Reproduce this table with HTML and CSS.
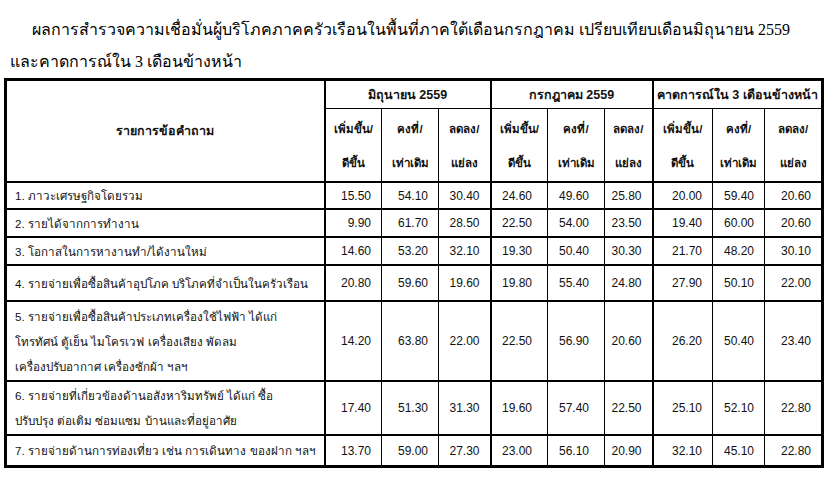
FILE: index.html
```html
<!DOCTYPE html>
<html lang="th">
<head>
<meta charset="utf-8">
<title>ผลการสำรวจความเชื่อมั่นผู้บริโภค</title>
<link rel="stylesheet" href="styles.css">
</head>
<body>
<div class="page">
  <h1 class="title">
    <span class="title-line first">ผลการสำรวจความเชื่อมั่นผู้บริโภคภาคครัวเรือนในพื้นที่ภาคใต้เดือนกรกฎาคม เปรียบเทียบเดือนมิถุนายน 2559</span>
    <span class="title-line">และคาดการณ์ใน 3 เดือนข้างหน้า</span>
  </h1>
  <table class="survey">
    <colgroup>
      <col class="c-item">
      <col class="c-a"><col class="c-b"><col class="c-c">
      <col class="c-d"><col class="c-e"><col class="c-f">
      <col class="c-g"><col class="c-h"><col class="c-i">
    </colgroup>
    <thead>
      <tr class="h1">
        <th rowspan="2" class="item-head grp-end">รายการข้อคำถาม</th>
        <th colspan="3" class="grp-end">มิถุนายน 2559</th>
        <th colspan="3" class="grp-end">กรกฎาคม 2559</th>
        <th colspan="3">คาดการณ์ใน 3 เดือนข้างหน้า</th>
      </tr>
      <tr class="h2">
        <th>เพิ่มขึ้น/<br>ดีขึ้น</th><th>คงที่/<br>เท่าเดิม</th><th class="grp-end">ลดลง/<br>แย่ลง</th>
        <th>เพิ่มขึ้น/<br>ดีขึ้น</th><th>คงที่/<br>เท่าเดิม</th><th class="grp-end">ลดลง/<br>แย่ลง</th>
        <th>เพิ่มขึ้น/<br>ดีขึ้น</th><th>คงที่/<br>เท่าเดิม</th><th>ลดลง/<br>แย่ลง</th>
      </tr>
    </thead>
    <tbody>
      <tr class="r1">
        <td class="item grp-end">1. ภาวะเศรษฐกิจโดยรวม</td>
        <td>15.50</td><td>54.10</td><td class="grp-end">30.40</td>
        <td class="mid">24.60</td><td class="mid">49.60</td><td class="grp-end">25.80</td>
        <td>20.00</td><td>59.40</td><td>20.60</td>
      </tr>
      <tr class="r2">
        <td class="item grp-end">2. รายได้จากการทำงาน</td>
        <td>9.90</td><td>61.70</td><td class="grp-end">28.50</td>
        <td class="mid">22.50</td><td class="mid">54.00</td><td class="grp-end">23.50</td>
        <td>19.40</td><td>60.00</td><td>20.60</td>
      </tr>
      <tr class="r3">
        <td class="item grp-end">3. โอกาสในการหางานทำ/ได้งานใหม่</td>
        <td>14.60</td><td>53.20</td><td class="grp-end">32.10</td>
        <td class="mid">19.30</td><td class="mid">50.40</td><td class="grp-end">30.30</td>
        <td>21.70</td><td>48.20</td><td>30.10</td>
      </tr>
      <tr class="r4">
        <td class="item grp-end">4. รายจ่ายเพื่อซื้อสินค้าอุปโภค บริโภคที่จำเป็นในครัวเรือน</td>
        <td>20.80</td><td>59.60</td><td class="grp-end">19.60</td>
        <td class="mid">19.80</td><td class="mid">55.40</td><td class="grp-end">24.80</td>
        <td>27.90</td><td>50.10</td><td>22.00</td>
      </tr>
      <tr class="r5">
        <td class="item grp-end">5. รายจ่ายเพื่อซื้อสินค้าประเภทเครื่องใช้ไฟฟ้า ได้แก่<br>โทรทัศน์ ตู้เย็น ไมโครเวฟ เครื่องเสียง พัดลม<br>เครื่องปรับอากาศ เครื่องซักผ้า ฯลฯ</td>
        <td>14.20</td><td>63.80</td><td class="grp-end">22.00</td>
        <td class="mid">22.50</td><td class="mid">56.90</td><td class="grp-end">20.60</td>
        <td>26.20</td><td>50.40</td><td>23.40</td>
      </tr>
      <tr class="r6">
        <td class="item grp-end">6. รายจ่ายที่เกี่ยวข้องด้านอสังหาริมทรัพย์ ได้แก่ ซื้อ<br>ปรับปรุง ต่อเติม ซ่อมแซม  บ้านและที่อยู่อาศัย</td>
        <td>17.40</td><td>51.30</td><td class="grp-end">31.30</td>
        <td class="mid">19.60</td><td class="mid">57.40</td><td class="grp-end">22.50</td>
        <td>25.10</td><td>52.10</td><td>22.80</td>
      </tr>
      <tr class="r7">
        <td class="item grp-end">7. รายจ่ายด้านการท่องเที่ยว เช่น การเดินทาง ของฝาก ฯลฯ</td>
        <td>13.70</td><td>59.00</td><td class="grp-end">27.30</td>
        <td class="mid">23.00</td><td class="mid">56.10</td><td class="grp-end">20.90</td>
        <td>32.10</td><td>45.10</td><td>22.80</td>
      </tr>
    </tbody>
  </table>
</div>
</body>
</html>
```

FILE: styles.css
```css
html, body {
  margin: 0;
  padding: 0;
  background: #ffffff;
  color: #000000;
}

.page {
  padding: 14px 0 0 4px;
}

.title {
  margin: 0;
  padding: 0;
  font-family: "Liberation Serif", serif;
  font-weight: normal;
  font-size: 16px;
  color: #000;
}

.title-line {
  display: block;
  height: 32px;
  line-height: 32px;
  white-space: nowrap;
  padding-left: 6px;
  overflow: visible;
}

.title-line.first {
  padding-left: 28px;
}

.survey {
  border-collapse: collapse;
  table-layout: fixed;
  width: 817px;
  border: 3px solid #000;
  font-family: "Liberation Sans", sans-serif;
  font-size: 12px;
  color: #111;
}

.c-item { width: 319px; }
.c-a { width: 57px; }
.c-b { width: 57px; }
.c-c { width: 52px; }
.c-d { width: 57px; }
.c-e { width: 57px; }
.c-f { width: 48px; }
.c-g { width: 60px; }
.c-h { width: 52px; }
.c-i { width: 58px; }

.survey th,
.survey td {
  border: 1px solid #000;
  padding: 0;
}

.survey th {
  font-weight: bold;
  text-align: center;
  vertical-align: middle;
  white-space: nowrap;
}

.survey .grp-end {
  border-right: 2px solid #000;
}

.h1 th {
  height: 27px;
  font-size: 12.5px;
}

.h1 th.item-head {
  font-size: 12.5px;
}

.h2 th {
  height: 70px;
  line-height: 34px;
  padding-top: 2px;
  font-size: 11.5px;
}

.survey thead tr.h2 th,
.survey thead th.item-head {
  border-bottom: 2px solid #000;
}

.survey tbody td {
  text-align: right;
  padding-right: 10px;
  vertical-align: middle;
  border-bottom-width: 2px;
  line-height: 20px;
}

.survey tbody td.mid {
  padding-right: 15px;
}

.survey tbody td.item {
  text-align: left;
  padding: 0 0 0 8px;
  line-height: 25px;
  font-size: 11.6px;
  white-space: nowrap;
}

.r1 td { height: 25px; }
.r2 td { height: 26px; }
.r3 td { height: 26px; }
.r4 td { height: 34px; }
.r5 td { height: 78px; }
.r6 td { height: 52px; }
.r7 td { height: 29px; }
```
